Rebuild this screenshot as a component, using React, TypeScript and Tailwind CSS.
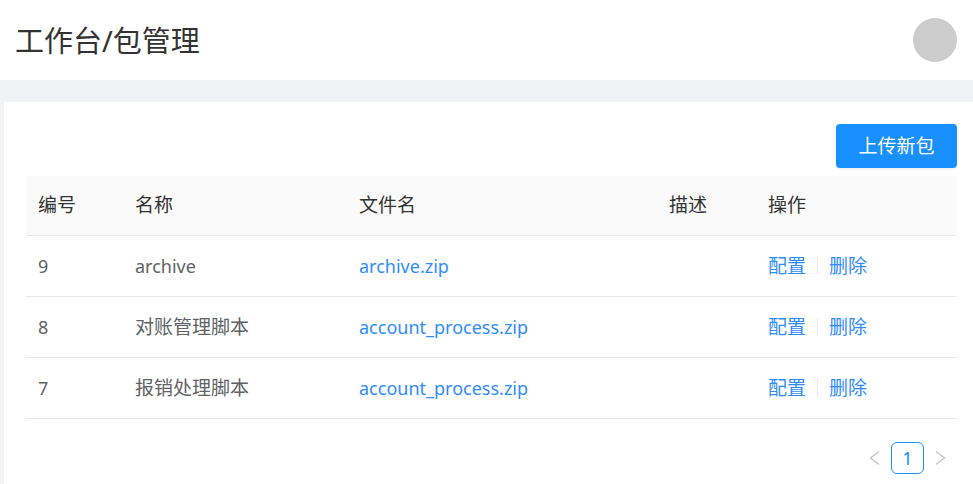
import React from "react";

const rows = [
  { id: "9", name: "archive", file: "archive.zip", cjk: false },
  { id: "8", name: "对账管理脚本", file: "account_process.zip", cjk: true },
  { id: "7", name: "报销处理脚本", file: "account_process.zip", cjk: true },
];

const font = { fontFamily: '"Noto Sans", "Noto Sans CJK SC", sans-serif' };

export default function App() {
  return (
    <div className="w-[973px] h-[484px] overflow-hidden bg-[#f0f2f5] flex flex-col" style={font}>
      <header className="h-[80px] bg-white flex items-center justify-between pl-[15px] pr-[16px] shrink-0">
        <h1 className="text-[29px] text-[#333] font-normal leading-none">工作台/包管理</h1>
        <div className="w-[44px] h-[44px] rounded-full bg-[#cccccc]" />
      </header>
      <main className="mt-[22px] ml-[4px] flex-1 bg-white pl-[22px] pr-[16px] pt-[22px]">
        <div className="flex justify-end">
          <button className="h-[44px] w-[121px] rounded-[4px] bg-[#1890ff] text-white text-[19px] shadow-[0_2px_0_rgba(0,0,0,0.04)]">
            上传新包
          </button>
        </div>
        <div className="mt-[8px] w-[931px]">
          <div className="flex h-[60px] items-center bg-[#fafafa] rounded-t-[4px] border-b border-[#e8e8e8] text-[19px] text-[#333]">
            <div className="w-[97px] pl-[12px]">编号</div>
            <div className="w-[224px] pl-[12px]">名称</div>
            <div className="w-[310px] pl-[12px]">文件名</div>
            <div className="w-[99px] pl-[12px]">描述</div>
            <div className="flex-1 pl-[12px]">操作</div>
          </div>
          {rows.map((r, i) => (
            <div key={i} className="flex h-[61px] items-center border-b border-[#e8e8e8] text-[18px] text-[#606266]">
              <div className="w-[97px] pl-[12px]">{r.id}</div>
              <div className={r.cjk ? "w-[224px] pl-[12px] text-[19px]" : "w-[224px] pl-[12px]"}>{r.name}</div>
              <div className="w-[310px] pl-[12px] text-[#2f8cff]">{r.file}</div>
              <div className="w-[99px] pl-[12px]"></div>
              <div className="flex-1 pl-[12px] flex items-center text-[#2f8cff] text-[19px]">
                <span>配置</span>
                <span className="mx-[11px] w-px h-[18px] bg-[#e8e8e8]" />
                <span>删除</span>
              </div>
            </div>
          ))}
          <div className="flex justify-end items-center mt-[23px] pr-[11px] gap-[11px]">
            <span className="text-[#c0c4cc] flex">
              <svg width="11" height="16" viewBox="0 0 11 16" fill="none" stroke="currentColor" strokeWidth="1.4">
                <path d="M10 1.5L1.5 8 10 14.5" />
              </svg>
            </span>
            <div className="w-[33px] h-[32px] rounded-[6px] border border-[#1890ff] text-[#1890ff] flex items-center justify-center text-[18px]">
              1
            </div>
            <span className="text-[#c0c4cc] flex">
              <svg width="11" height="16" viewBox="0 0 11 16" fill="none" stroke="currentColor" strokeWidth="1.4">
                <path d="M1 1.5L9.5 8 1 14.5" />
              </svg>
            </span>
          </div>
        </div>
      </main>
    </div>
  );
}
